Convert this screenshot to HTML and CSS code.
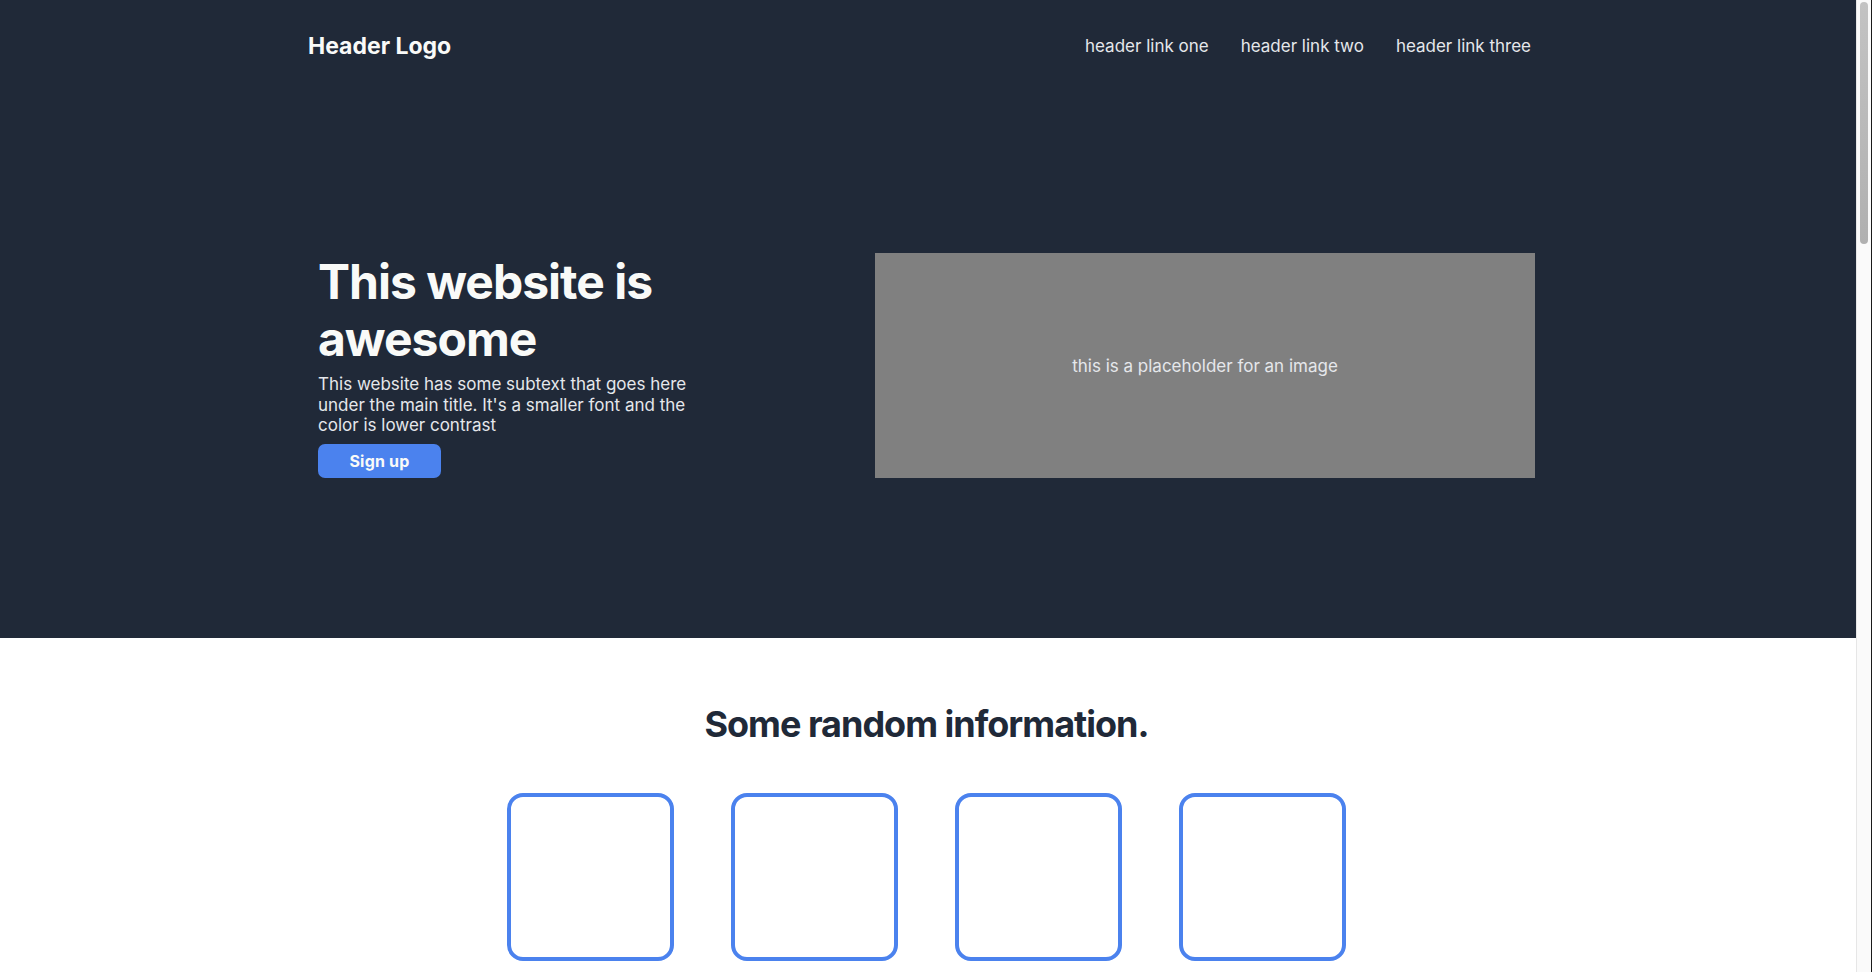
FILE: index.html
```html
<!DOCTYPE html>
<html lang="en">
<head>
<meta charset="utf-8">
<title>Landing Page</title>
<link rel="stylesheet" href="styles.css">
</head>
<body>
  <div class="top">
    <header class="header">
      <div class="logo">Header Logo</div>
      <nav class="nav">
        <a href="#">header link one</a>
        <a href="#">header link two</a>
        <a href="#">header link three</a>
      </nav>
    </header>
    <section class="hero">
      <div class="hero-text">
        <h1 class="hero-title">This website is awesome</h1>
        <p class="hero-sub">This website has some subtext that goes here under the main title. It's a smaller font and the color is lower contrast</p>
        <button class="btn">Sign up</button>
      </div>
      <div class="placeholder">this is a placeholder for an image</div>
    </section>
  </div>
  <section class="info">
    <h2 class="info-title">Some random information.</h2>
    <div class="cards">
      <div class="card"><div class="card-box"></div><p class="card-text">this is some subtext under an illustration or image</p></div>
      <div class="card"><div class="card-box"></div><p class="card-text">this is some subtext under an illustration or image</p></div>
      <div class="card"><div class="card-box"></div><p class="card-text">this is some subtext under an illustration or image</p></div>
      <div class="card"><div class="card-box"></div><p class="card-text">this is some subtext under an illustration or image</p></div>
    </div>
  </section>
  <section class="quote">
    <p>Lorem ipsum dolor sit amet consectetur adipisicing elit.</p>
  </section>
  <div class="scrollbar"><div class="scroll-thumb"></div></div>
</body>
</html>
```

FILE: styles.css
```css
body {
  margin: 0;
  padding-right: 16px;
  font-family: Inter, "Noto Sans", sans-serif;
  background: #ffffff;
}
.top {
  background: #202938;
}
.header {
  width: 1240px;
  margin: 0 auto;
  height: 92px;
  display: flex;
  align-items: center;
  justify-content: space-between;
}
.logo {
  color: #f9faf8;
  font-size: 23px;
  font-weight: 700;
}
.nav {
  display: flex;
  gap: 32px;
  padding-right: 17px;
}
.nav a {
  color: #e5e7eb;
  text-decoration: none;
  font-size: 17px;
}
.hero {
  width: 1217px;
  margin: 0 auto;
  padding: 161px 3px 160px 0;
  display: flex;
  justify-content: space-between;
  align-items: center;
}
.hero-text {
  width: 380px;
}
.hero-title {
  margin: 0;
  color: #f9faf8;
  font-size: 48px;
  line-height: 57px;
  font-weight: 700;
  letter-spacing: -1px;
}
.hero-sub {
  margin: 7px 0 8px;
  color: #e5e7eb;
  font-size: 17px;
  line-height: 20.7px;
}
.btn {
  width: 123px;
  height: 34px;
  border: none;
  border-radius: 7px;
  background: #4b82ee;
  color: #f9faf8;
  font-family: Inter, sans-serif;
  font-size: 16px;
  font-weight: 700;
  letter-spacing: 0.2px;
}
.placeholder {
  width: 660px;
  height: 225px;
  background: #808080;
  color: #e5e7eb;
  font-size: 17px;
  display: flex;
  align-items: center;
  justify-content: center;
}
.info {
  padding: 66px 3px 60px 0;
  display: flex;
  flex-direction: column;
  align-items: center;
}
.info-title {
  margin: 0;
  color: #202938;
  font-size: 36px;
  line-height: 40px;
  font-weight: 700;
  letter-spacing: -1px;
}
.cards {
  margin-top: 49px;
  display: flex;
  gap: 57px;
}
.card {
  width: 167px;
  display: flex;
  flex-direction: column;
  align-items: center;
}
.card-box {
  width: 167px;
  height: 168px;
  box-sizing: border-box;
  border: 4px solid #4b82ee;
  border-radius: 16px;
}
.card-text {
  margin: 8px 0 0;
  color: #6b7280;
  font-size: 16px;
  text-align: center;
}
.quote {
  background: #e5e7eb;
  padding: 100px 0;
  text-align: center;
  font-size: 36px;
  font-style: italic;
  color: #202938;
}
.scrollbar {
  position: fixed;
  top: 0;
  right: 0;
  width: 16px;
  height: 100vh;
  box-sizing: border-box;
  background: #fafafa;
  border-left: 1px solid #e6e6e6;
  border-right: 1px solid #1a1a1a;
  display: flex;
  justify-content: center;
  padding-top: 2px;
}
.scroll-thumb {
  width: 8px;
  height: 242px;
  border-radius: 4px;
  background: linear-gradient(#c3c3c3, #b0b0b0);
}
```
